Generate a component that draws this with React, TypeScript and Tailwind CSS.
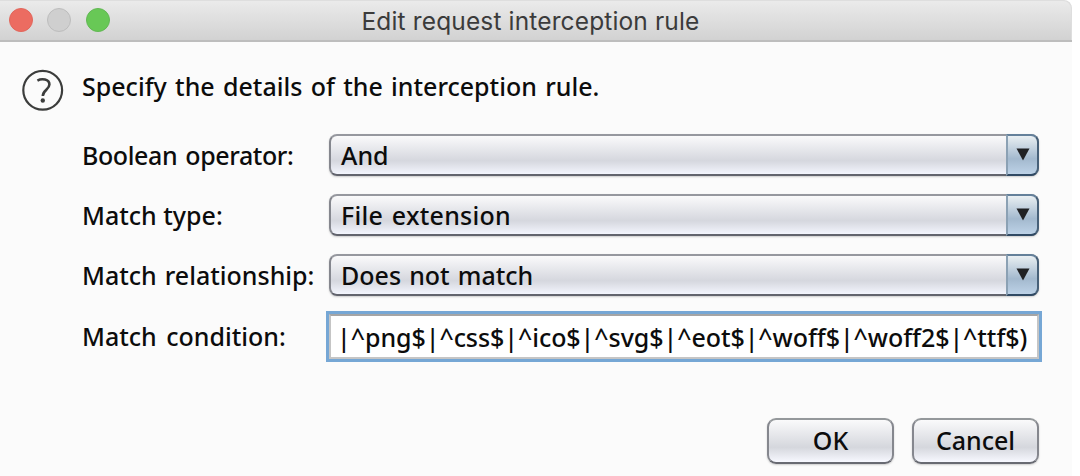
import React from "react";

function ComboBox({ value, spacing }: { value: string; spacing: string }) {
  return (
    <button className="mt-[1px] flex h-[42px] w-[710px] rounded-[8px] border-2 border-[#85878e] border-t-[#96989f] border-b-[#62646d] bg-linear-to-b from-[#fafafb] via-[#d5d7de] via-65% to-[#f3f5fd] text-left shadow-[0_1px_2px_#00000030]">
      <span className={`flex-1 whitespace-nowrap pl-[10px] leading-[39px] ${spacing}`}>{value}</span>
      <span className="-my-[2px] -mr-[2px] flex h-[42px] w-[33px] items-center justify-center rounded-r-[8px] border-2 border-[#476078] border-t-[#64809a] border-b-[#304a64] border-l-[#8ba1b4] bg-linear-to-b from-[#e9eff2] via-[#a3b9ce] via-60% to-[#bdd2e7]">
        <svg width="14" height="13" viewBox="0 0 14 13" className="-mt-[1px]">
          <path d="M.5 .5H13.5L7 12.5Z" fill="#202124" />
        </svg>
      </span>
    </button>
  );
}

function PushButton({ label, spacing }: { label: string; spacing: string }) {
  return (
    <button className={`flex h-[46px] w-[127px] items-center justify-center rounded-[9px] border-2 border-[#85878e] border-t-[#94989b] border-b-[#686a72] bg-linear-to-b from-[#fafafb] via-[#d5d7dd] via-65% to-[#f7f8ff] whitespace-nowrap shadow-[0_1px_2px_#00000030] ${spacing}`}>
      {label}
    </button>
  );
}

export default function App() {
  return (
    <div className="h-[476px] w-[1080px] overflow-hidden bg-white">
      <div className="flex h-full w-[1072px] flex-col overflow-hidden rounded-tr-[8px] bg-[#fbfbfb] font-['Noto_Sans',sans-serif] text-[25px] font-medium text-[#0c0c0c]">
        <header className="flex h-[42px] shrink-0 items-center rounded-tr-[8px] border-b-2 border-[#bdbdbd] bg-linear-to-b from-[#ebebeb] to-[#d2d2d2] shadow-[inset_-1px_1px_0_#dedede]">
          <div className="flex gap-[14.5px] pl-[8.5px]">
            <span className="size-[24px] rounded-full border border-[#e2665b] bg-[#ec6c61]" />
            <span className="size-[24px] rounded-full border-[1.5px] border-[#bdbdbd] bg-[#cfcfcf]" />
            <span className="size-[24px] rounded-full border border-[#62b854] bg-[#68c856]" />
          </div>
          <h1 className="mt-[2px] ml-[252px] whitespace-nowrap font-['Inter',sans-serif] text-[24.5px] leading-[40px] font-normal tracking-[0.14px] text-[#3b3b3b]">Edit request interception rule</h1>
        </header>
        <main className="flex flex-1 flex-col">
          <div className="flex h-[91px] pl-[22px]">
            <svg width="42" height="42" viewBox="0 0 42 42" className="mt-[27px]" fill="none" stroke="#3c3d3c">
              <circle cx="20.7" cy="21.2" r="19.4" strokeWidth="2.2" />
              <path d="M15.4 11.6C19.8 9.2 27.4 10 27.4 15.6C27.4 20.5 20.8 21 20.8 27" strokeWidth="2.6" />
              <circle cx="20.8" cy="31.5" r="2.2" fill="#3c3d3c" stroke="none" />
            </svg>
            <p className="mt-[24px] ml-[18px] whitespace-nowrap leading-[40px] [word-spacing:1.8px]">Specify the details of the interception rule.</p>
          </div>
          <div className="grid auto-rows-[60px] grid-cols-[247px_711px] pl-[82px]">
            <label className="whitespace-nowrap leading-[45px] tracking-[-0.4px] [word-spacing:2px]">Boolean operator:</label>
            <ComboBox value="And" spacing="" />
            <label className="whitespace-nowrap leading-[45px]">Match type:</label>
            <ComboBox value="File extension" spacing="tracking-[0.25px] [word-spacing:2px]" />
            <label className="whitespace-nowrap leading-[45px] [word-spacing:1.5px]">Match relationship:</label>
            <ComboBox value="Does not match" spacing="[word-spacing:1.6px]" />
            <label className="whitespace-nowrap leading-[47px] [word-spacing:3px]">Match condition:</label>
            <div className="-mt-[2px] -ml-[3px] h-[51px] w-[716px] border-[3px] border-[#76a7d5] bg-white">
              <div className="h-full border-2 border-[#c5c5c5] border-t-[#a5a5a5] pl-[6px] leading-[42px] tracking-[-0.06px] whitespace-nowrap">|^png$|^css$|^ico$|^svg$|^eot$|^woff$|^woff2$|^ttf$)</div>
            </div>
          </div>
          <div className="mt-[45px] flex gap-[18px] pl-[767px]">
            <PushButton label="OK" spacing="" />
            <PushButton label="Cancel" spacing="" />
          </div>
        </main>
      </div>
    </div>
  );
}
